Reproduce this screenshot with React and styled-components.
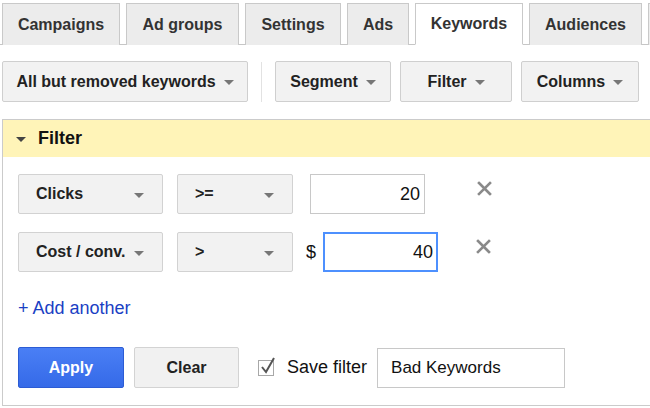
import React from 'react'
import styled, {createGlobalStyle} from 'styled-components';

const GlobalStyle = createGlobalStyle`
    body {
        margin: 0;
        background: #ffffff;
        font-family: "Liberation Sans", Arial, sans-serif;
        overflow: hidden;
    }
`;

const Page = styled.div`
    width: 650px;
    height: 408px;
    overflow: hidden;
    display: flex;
    flex-direction: column;
`;

const TabBar = styled.div`
    display: flex;
    gap: 6px;
    padding: 3px 0 0 2px;
    border-bottom: 1px solid #c6c6c6;
    height: 41px;
    white-space: nowrap;
`;

const Tab = styled.div`
    flex: 0 0 auto;
    width: ${p => p.$w}px;
    box-sizing: border-box;
    height: 42px;
    display: flex;
    align-items: center;
    justify-content: center;
    border: 1px solid #c9c9c9;
    border-bottom: ${p => p.$active ? '1px solid #ffffff' : 'none'};
    background: ${p => p.$active ? '#ffffff' : '#ececec'};
    color: #333333;
    font-size: 16px;
    font-weight: bold;
`;

const Toolbar = styled.div`
    display: flex;
    align-items: center;
    padding: 16px 0 0 2px;
    gap: 9px;
`;

const ToolButton = styled.div`
    flex: 0 0 auto;
    width: ${p => p.$w}px;
    height: 41px;
    box-sizing: border-box;
    display: flex;
    align-items: center;
    justify-content: center;
    gap: 8px;
    border: 1px solid #cfcfcf;
    border-radius: 2px;
    background: #f2f2f2;
    color: #222222;
    font-size: 16px;
    font-weight: bold;
`;

const Separator = styled.div`
    width: 1px;
    height: 40px;
    background: #e2e2e2;
    margin: 0 4px;
`;

const Caret = styled.span`
    display: inline-block;
    width: 0;
    height: 0;
    border-left: 5px solid transparent;
    border-right: 5px solid transparent;
    border-top: 5px solid ${p => p.$dark ? '#444' : '#777'};
    margin-top: 2px;
`;

const Panel = styled.div`
    margin: 17px 0 0 2px;
    border-top: 1px solid #cbcbcb;
    border-left: 1px solid #cbcbcb;
    border-bottom: 1px solid #cbcbcb;
    height: 287px;
    box-sizing: border-box;
`;

const PanelHeader = styled.div`
    height: 37px;
    background: #fff4b8;
    display: flex;
    align-items: center;
    gap: 12px;
    padding-left: 13px;
    font-size: 18px;
    font-weight: bold;
    color: #111111;
`;

const PanelBody = styled.div`
    padding: 17px 0 0 15px;
    display: flex;
    flex-direction: column;
`;

const Row = styled.div`
    display: flex;
    align-items: center;
    height: 40px;
    margin-bottom: 18px;
`;

const Select = styled.div`
    width: ${p => p.$w}px;
    height: 40px;
    box-sizing: border-box;
    margin-right: ${p => p.$mr}px;
    display: flex;
    align-items: center;
    justify-content: space-between;
    padding: 0 18px 0 17px;
    border: 1px solid #d2d2d2;
    border-radius: 2px;
    background: #f2f2f2;
    color: #222222;
    font-size: 16px;
    font-weight: bold;
`;

const Dollar = styled.span`
    font-size: 18px;
    color: #111;
    width: 17px;
`;

const NumberInput = styled.div`
    width: 115px;
    height: 40px;
    box-sizing: border-box;
    display: flex;
    align-items: center;
    justify-content: flex-end;
    padding-right: 4px;
    border: ${p => p.$focus ? '1px solid #4d90fe' : '1px solid #c8c8c8'};
    box-shadow: ${p => p.$focus ? 'inset 0 0 0 1px #4d90fe' : 'none'};
    font-size: 18px;
    color: #111;
    margin-right: ${p => p.$mr}px;
`;

const Remove = styled.svg`
    width: 15px;
    height: 15px;
    align-self: flex-start;
    margin-top: 7px;
`;

const AddLink = styled.a`
    color: #1a3fc4;
    font-size: 18px;
    text-decoration: none;
    margin: 8px 0 0 0;
    line-height: 20px;
`;

const Actions = styled.div`
    display: flex;
    align-items: center;
    margin-top: 29px;
`;

const ApplyButton = styled.div`
    width: 106px;
    height: 41px;
    box-sizing: border-box;
    display: flex;
    align-items: center;
    justify-content: center;
    background: linear-gradient(#4a7ff5, #356ae8);
    border: 1px solid #2c5cd4;
    border-radius: 2px;
    color: #ffffff;
    font-size: 16px;
    font-weight: bold;
    margin-right: 10px;
`;

const ClearButton = styled.div`
    width: 105px;
    height: 41px;
    box-sizing: border-box;
    display: flex;
    align-items: center;
    justify-content: center;
    background: #f1f1f1;
    border: 1px solid #d3d3d3;
    border-radius: 2px;
    color: #222;
    font-size: 16px;
    font-weight: bold;
    margin-right: 19px;
`;

const CheckBox = styled.div`
    width: 16px;
    height: 16px;
    box-sizing: border-box;
    border: 1px solid #a8a8a8;
    background: #fff;
    position: relative;
    margin-right: 13px;
`;

const CheckMark = styled.svg`
    position: absolute;
    left: 1px;
    top: -4px;
`;

const SaveLabel = styled.span`
    font-size: 18px;
    color: #111;
    margin-right: 10px;
`;

const NameInput = styled.div`
    width: 188px;
    height: 40px;
    box-sizing: border-box;
    display: flex;
    align-items: center;
    padding-left: 13px;
    border: 1px solid #c8c8c8;
    font-size: 17px;
    color: #111;
`;

const tabs = [
    {label: 'Campaigns', w: 118},
    {label: 'Ad groups', w: 113},
    {label: 'Settings', w: 96},
    {label: 'Ads', w: 62},
    {label: 'Keywords', w: 108, active: true},
    {label: 'Audiences', w: 113},
    {label: '', w: 40},
];

const RemoveIcon = () => (
    <Remove viewBox="0 0 15 15">
        <path d="M2 2 L13 13 M13 2 L2 13" stroke="#8a8a8a" strokeWidth="2.6" strokeLinecap="square"/>
    </Remove>
);

export default class App extends React.Component {
    render() {
        return (
            <Page>
                <GlobalStyle/>
                <TabBar>
                    {tabs.map((t, i) => (
                        <Tab key={i} $w={t.w} $active={t.active}>{t.label}</Tab>
                    ))}
                </TabBar>
                <Toolbar>
                    <ToolButton $w={246}>All but removed keywords <Caret/></ToolButton>
                    <Separator/>
                    <ToolButton $w={116}>Segment <Caret/></ToolButton>
                    <ToolButton $w={112}>Filter <Caret/></ToolButton>
                    <ToolButton $w={118}>Columns <Caret/></ToolButton>
                </Toolbar>
                <Panel>
                    <PanelHeader><Caret $dark/>Filter</PanelHeader>
                    <PanelBody>
                        <Row>
                            <Select $w={145} $mr={14}>Clicks <Caret/></Select>
                            <Select $w={116} $mr={17}>&gt;= <Caret/></Select>
                            <NumberInput $mr={52}>20</NumberInput>
                            <RemoveIcon/>
                        </Row>
                        <Row>
                            <Select $w={145} $mr={14}>Cost / conv. <Caret/></Select>
                            <Select $w={116} $mr={13}>&gt; <Caret/></Select>
                            <Dollar>$</Dollar>
                            <NumberInput $focus $mr={38}>40</NumberInput>
                            <RemoveIcon/>
                        </Row>
                        <AddLink href="#">+ Add another</AddLink>
                        <Actions>
                            <ApplyButton>Apply</ApplyButton>
                            <ClearButton>Clear</ClearButton>
                            <CheckBox>
                                <CheckMark width="16" height="18" viewBox="0 0 16 18">
                                    <path d="M2 10 L6 15 L14 1" fill="none" stroke="#555" strokeWidth="2"/>
                                </CheckMark>
                            </CheckBox>
                            <SaveLabel>Save filter</SaveLabel>
                            <NameInput>Bad Keywords</NameInput>
                        </Actions>
                    </PanelBody>
                </Panel>
            </Page>
        )
    }
}
